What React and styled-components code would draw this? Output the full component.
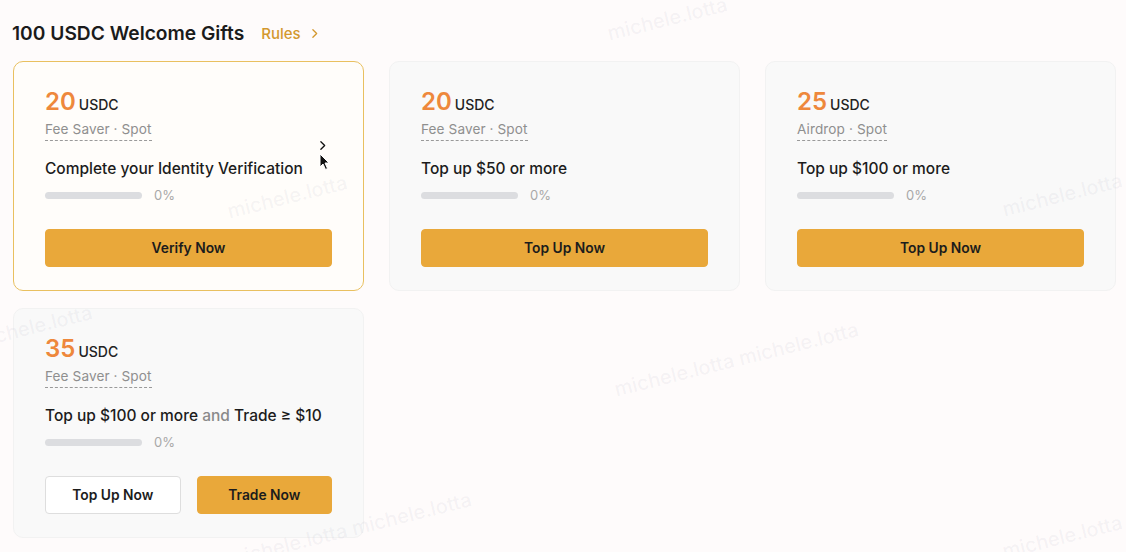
import React from "react";
import styled, { createGlobalStyle } from "styled-components";

const GlobalStyle = createGlobalStyle`
	html, body {
		margin: 0;
		padding: 0;
		background: #fefbfb;
		font-family: Inter, "Noto Sans", "Liberation Sans", sans-serif;
		color: #1e1e1e;
	}
`;

const Page = styled.div`
	position: relative;
	width: 1126px;
	height: 552px;
	overflow: hidden;
	padding: 21px 0 0 12px;
	box-sizing: border-box;
`;

const Header = styled.div`
	display: flex;
	align-items: center;
	gap: 17px;
	height: 24px;
	margin-bottom: 16px;
`;

const Title = styled.h2`
	margin: 0;
	font-size: 19.2px;
	font-weight: 600;
	color: #1b1b1b;
`;

const RulesLink = styled.a`
	display: flex;
	align-items: center;
	gap: 7px;
	font-size: 15px;
	font-weight: 500;
	color: #d3982e;
	cursor: pointer;
`;

const Grid = styled.div`
	display: grid;
	grid-template-columns: repeat(3, 351px);
	column-gap: 25px;
	row-gap: 17px;
	padding-left: 1px;
`;

const Card = styled.div`
	position: relative;
	height: 230px;
	box-sizing: border-box;
	padding: 25px 31px 0 31px;
	border-radius: 10px;
	border: 1px solid ${(p) => (p.$active ? "#e9c060" : "#f2f2f2")};
	background: ${(p) => (p.$active ? "#fffdfa" : "#f9f9f9")};
	display: flex;
	flex-direction: column;
`;

const Amount = styled.div`
	display: flex;
	align-items: baseline;
	gap: 3px;
	height: 30px;
`;

const Number = styled.span`
	font-size: 24px;
	font-weight: 600;
	color: #ee883c;
`;

const Unit = styled.span`
	font-size: 14px;
	font-weight: 500;
	color: #222;
`;

const Tag = styled.span`
	align-self: flex-start;
	margin-top: 3px;
	font-size: 13.6px;
	letter-spacing: 0.1px;
	color: #8f8f8f;
	line-height: 18px;
	border-bottom: 1px dashed #9a9a9a;
	padding-bottom: 2px;
`;

const Task = styled.div`
	margin-top: 17px;
	font-size: 15.5px;
	font-weight: 500;
	line-height: 22px;
	color: #1c1c1c;
`;

const Muted = styled.span`
	color: #8a8a8a;
`;

const Progress = styled.div`
	display: flex;
	align-items: center;
	gap: 12px;
	margin-top: 5px;
	height: 20px;
`;

const Track = styled.div`
	width: 97px;
	height: 7px;
	border-radius: 4px;
	background: #dcdde0;
`;

const Percent = styled.span`
	font-size: 13px;
	color: #a8a8a8;
`;

const Actions = styled.div`
	display: flex;
	gap: 16px;
	margin-top: 24px;
`;

const Button = styled.button`
	flex: 1;
	height: 38px;
	border-radius: 4px;
	border: 1px solid ${(p) => (p.$outline ? "#dedede" : "#e9a83a")};
	background: ${(p) => (p.$outline ? "#ffffff" : "#e9a83a")};
	font-family: inherit;
	font-size: 13.8px;
	font-weight: 600;
	color: #1c1c1c;
	cursor: pointer;
`;

const HoverChevron = styled.div`
	position: absolute;
	right: 34px;
	top: 74px;
	color: #111;
`;

const Cursor = styled.svg`
	position: absolute;
	left: 305px;
	top: 91px;
`;

const Watermark = styled.span`
	position: absolute;
	left: ${(p) => p.$x}px;
	top: ${(p) => p.$y}px;
	transform: rotate(-14deg);
	transform-origin: left top;
	font-size: 20px;
	font-weight: 500;
	color: rgba(120, 120, 150, 0.07);
	white-space: nowrap;
	pointer-events: none;
`;

const Chevron = ({ size = 14, stroke = 2 }) => (
	<svg width={size} height={size} viewBox="0 0 24 24" fill="none" stroke="currentColor" strokeWidth={stroke} strokeLinecap="round" strokeLinejoin="round">
		<path d="M9 5l7 7-7 7" />
	</svg>
);

const gifts = [
	{ amount: 20, tag: "Fee Saver · Spot", task: "Complete your Identity Verification", actions: [{ label: "Verify Now" }], active: true },
	{ amount: 20, tag: "Fee Saver · Spot", task: "Top up $50 or more", actions: [{ label: "Top Up Now" }] },
	{ amount: 25, tag: "Airdrop · Spot", task: "Top up $100 or more", actions: [{ label: "Top Up Now" }] },
	{
		amount: 35,
		tag: "Fee Saver · Spot",
		task: (
			<>
				Top up $100 or more <Muted>and</Muted> Trade ≥ $10
			</>
		),
		actions: [{ label: "Top Up Now", outline: true }, { label: "Trade Now" }],
	},
];

const marks = [
	[605, 22, "michele.lotta"],
	[225, 200, "michele.lotta"],
	[-30, 330, "michele.lotta"],
	[612, 378, "michele.lotta michele.lotta"],
	[1000, 198, "michele.lotta"],
	[225, 548, "michele.lotta michele.lotta"],
	[1000, 540, "michele.lotta"],
];

export default function App() {
	return (
		<Page>
			<GlobalStyle />
			<Header>
				<Title>100 USDC Welcome Gifts</Title>
				<RulesLink>
					Rules <Chevron size={13} stroke={2.4} />
				</RulesLink>
			</Header>
			<Grid>
				{gifts.map((g, i) => (
					<Card key={i} $active={g.active}>
						<Amount>
							<Number>{g.amount}</Number>
							<Unit>USDC</Unit>
						</Amount>
						<Tag>{g.tag}</Tag>
						<Task>{g.task}</Task>
						<Progress>
							<Track />
							<Percent>0%</Percent>
						</Progress>
						<Actions>
							{g.actions.map((a) => (
								<Button key={a.label} $outline={a.outline}>
									{a.label}
								</Button>
							))}
						</Actions>
						{g.active && (
							<>
								<HoverChevron>
									<Chevron size={13} stroke={2.4} />
								</HoverChevron>
								<Cursor width="12" height="18" viewBox="0 0 12 18">
									<path d="M1 1 L1 14 L4 11 L6.5 16.5 L8.5 15.5 L6 10 L10 10 Z" fill="#111" stroke="#fff" strokeWidth="1" />
								</Cursor>
							</>
						)}
					</Card>
				))}
			</Grid>
			{marks.map(([x, y, t], i) => (
				<Watermark key={i} $x={x} $y={y}>
					{t}
				</Watermark>
			))}
		</Page>
	);
}
